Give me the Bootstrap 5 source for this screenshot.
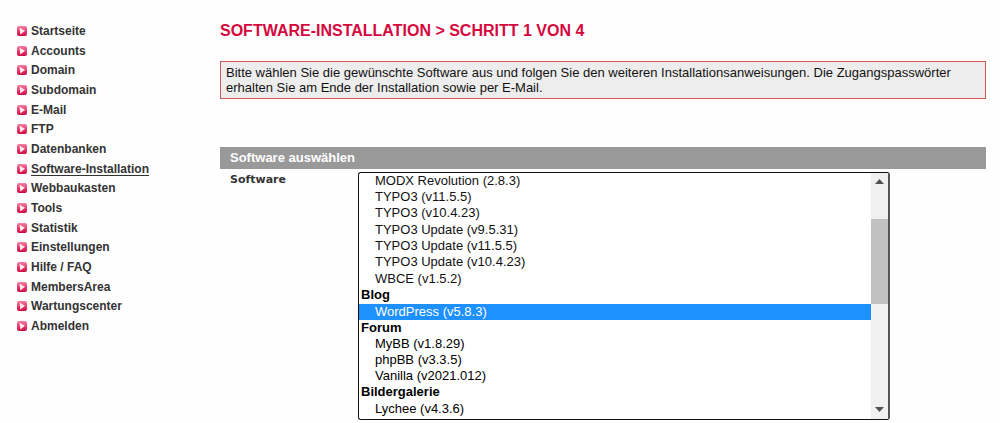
<!DOCTYPE html>
<html lang="de">
<head>
<meta charset="utf-8">
<meta name="viewport" content="width=device-width, initial-scale=1">
<title>Software-Installation</title>
<link href="https://cdn.jsdelivr.net/npm/bootstrap@5.3.0/dist/css/bootstrap.min.css" rel="stylesheet">
<style>
  body { font-family: "Liberation Sans", Arial, sans-serif; font-size: 13px; color: #111; background: #fefefe; }
  .page-body { padding: 21px 14px 0 17px; }
  .side-menu { width: 203px; min-height: 315px; display: grid; grid-auto-rows: 1fr; }
  .side-menu a { color: #333; font-size: 12px; line-height: 18px; font-weight: bold; text-decoration: none; }
  .side-menu a:hover, .side-menu a.active { text-decoration: underline; text-underline-offset: 2px; }
  .page-title { font-size: 16px; line-height: 20px; font-weight: bold; color: #d5083e; }
  .notice { background: #ededed; border: 1px solid #d4585a; line-height: 15px; padding: 3px 5px; margin-top: 20px; }
  .section-head { background: #999; color: #fff; font-size: 13px; line-height: 22px; font-weight: bold; margin-top: 48px; padding-left: 10px; }
  .form-line { padding: 3px 0 0 10px; }
  .field-label { width: 128px; font: bold 11px/16px "DejaVu Sans", Verdana, sans-serif; color: #333; }
  .list-frame { flex: 0 1 532px; border: 1px solid #111; border-right: 2px solid #555; border-radius: 3px; background: #fff; overflow: hidden; }
  .list-frame select { border: 0; outline: 0; overflow: hidden; height: 246px; padding: 0; background: #fff; color: #111; font-size: 13px; }
  select option { min-height: 0; padding: 0 16px 1px; }
  select > option:nth-of-type(3n) { padding-bottom: 2px; }
  select optgroup { color: #000; }
  select option:checked { background: linear-gradient(#1e90ff, #1e90ff); -webkit-text-fill-color: #fff; }
  .scroll-track { width: 17px; background: #f0f0f0; padding: 6px 0; }
  .scroll-thumb { height: 85px; margin-top: 34px; background: #c1c1c1; }
</style>
</head>
<body>
<svg width="0" height="0" class="position-absolute" aria-hidden="true">
  <defs>
    <linearGradient id="pink" x1="0" y1="0" x2="0" y2="1">
      <stop offset="0" stop-color="#f580a2"/><stop offset=".5" stop-color="#e63f70"/><stop offset="1" stop-color="#cf0a42"/>
    </linearGradient>
  </defs>
  <symbol id="arrow" viewBox="0 0 10 10">
    <rect width="10" height="10" rx="2" fill="url(#pink)"/>
    <path d="M2.600 1.800 8 4.800 3.400 8.400Z" fill="#fff" opacity=".9"/>
  </symbol>
</svg>
<div class="page-body d-flex align-items-start">
  <nav class="side-menu flex-shrink-0" id="menu" aria-label="Hauptmenü"></nav>
  <main class="flex-grow-1">
    <h1 class="page-title mb-0">SOFTWARE-INSTALLATION &gt; SCHRITT 1 VON 4</h1>
    <div class="notice">Bitte wählen Sie die gewünschte Software aus und folgen Sie den weiteren Installationsanweisungen. Die Zugangspasswörter erhalten Sie am Ende der Installation sowie per E-Mail.</div>
    <form>
      <h2 class="section-head mb-0">Software auswählen</h2>
      <div class="form-line d-flex align-items-start">
        <label class="field-label flex-shrink-0" for="software">Software</label>
        <div class="list-frame d-flex">
          <select id="software" size="15" class="flex-grow-1">
            <option>MODX Revolution (2.8.3)</option>
            <option>TYPO3 (v11.5.5)</option>
            <option>TYPO3 (v10.4.23)</option>
            <option>TYPO3 Update (v9.5.31)</option>
            <option>TYPO3 Update (v11.5.5)</option>
            <option>TYPO3 Update (v10.4.23)</option>
            <option>WBCE (v1.5.2)</option>
            <optgroup label="Blog"><option selected>WordPress (v5.8.3)</option></optgroup>
            <optgroup label="Forum"><option>MyBB (v1.8.29)</option><option>phpBB (v3.3.5)</option><option>Vanilla (v2021.012)</option></optgroup>
            <optgroup label="Bildergalerie"><option>Lychee (v4.3.6)</option></optgroup>
          </select>
          <div class="scroll-track d-flex flex-column flex-shrink-0" aria-hidden="true">
            <svg class="mx-auto" width="9" height="6"><path d="M0 5 4.500 0 9 5Z" fill="#505050"/></svg>
            <div class="scroll-thumb"></div>
            <svg class="mx-auto mt-auto" width="9" height="6"><path d="M0 0H9L4.500 5Z" fill="#505050"/></svg>
          </div>
        </div>
      </div>
    </form>
  </main>
</div>
<script>
  const entries = ["Startseite", "Accounts", "Domain", "Subdomain", "E-Mail", "FTP", "Datenbanken", "Software-Installation", "Webbaukasten", "Tools", "Statistik", "Einstellungen", "Hilfe / FAQ", "MembersArea", "Wartungscenter", "Abmelden"];
  document.getElementById("menu").innerHTML = entries.map(t =>
    `<div class="d-flex align-items-center"><svg width="10" height="10" class="me-1 flex-shrink-0" aria-hidden="true"><use href="#arrow"/></svg><a href="#"${t === "Software-Installation" ? ' class="active" aria-current="page"' : ""}>${t}</a></div>`).join("");
</script>
<script src="https://cdn.jsdelivr.net/npm/bootstrap@5.3.0/dist/js/bootstrap.bundle.min.js"></script>
</body>
</html>
